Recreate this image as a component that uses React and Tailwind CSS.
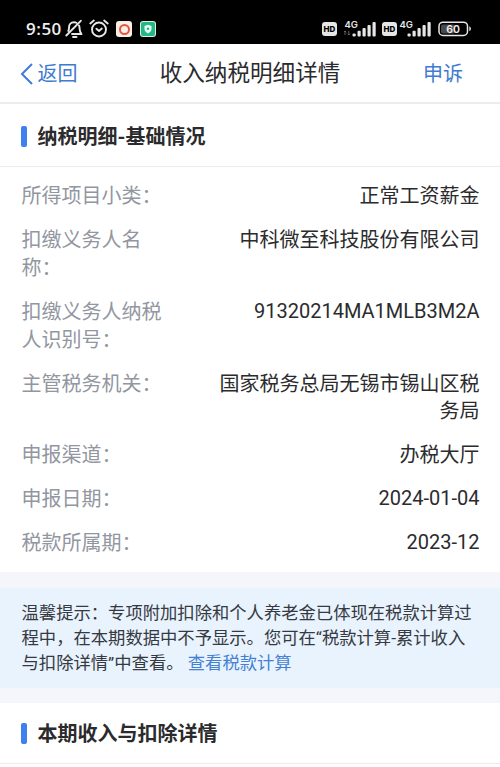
const rows = [
  { label: ["所得项目小类："], value: ["正常工资薪金"] },
  { label: ["扣缴义务人名", "称："], value: ["中科微至科技股份有限公司"] },
  { label: ["扣缴义务人纳税", "人识别号："], value: ["91320214MA1MLB3M2A"], latin: true },
  { label: ["主管税务机关："], value: ["国家税务总局无锡市锡山区税", "务局"] },
  { label: ["申报渠道："], value: ["办税大厅"] },
  { label: ["申报日期："], value: ["2024-01-04"], latin: true },
  { label: ["税款所属期："], value: ["2023-12"], latin: true },
];

function MutedBell() {
  return (
    <svg className="ml-[2px] shrink-0" width="18" height="20" viewBox="0 0 18 20" fill="none" stroke="#e8e8e8" strokeWidth="1.9" strokeLinecap="round" strokeLinejoin="round">
      <path d="M14 6.500c.6 1 .6 2 .6 3.300 0 2.200.6 3.700 1.900 5.200H7" />
      <path d="M3.300 12C4 10.500 4 9.800 4 8.500c0-3 2-5.300 5-5.300.9 0 1.700.2 2.400.6" />
      <path d="M1.300 16.500 15.800 1.800M8 18h3.500" />
    </svg>
  );
}

function AlarmClock() {
  return (
    <svg className="ml-[6px] shrink-0" width="20" height="20" viewBox="0 0 20 20" fill="none" stroke="#e8e8e8" strokeWidth="1.9" strokeLinecap="round" strokeLinejoin="round">
      <circle cx="10" cy="10.500" r="7" />
      <path d="M1.300 4.500 4.800 1.600M18.700 4.500 15.200 1.600M7.400 9.800l2.600 2.100 2.800-2.300" />
    </svg>
  );
}

function HdBadge() {
  return (
    <span className="flex h-[14px] w-[15px] shrink-0 items-center justify-center rounded-[3px] bg-[#e6e6e6] font-['Inter',sans-serif] text-[8px] leading-none font-extrabold text-black">
      HD
    </span>
  );
}

function Signal({ data }) {
  return (
    <svg className="shrink-0" width="34" height="20" viewBox="0 0 34 20" fill="#e6e6e6">
      <text x="0.500" y="8.500" fontFamily="Inter, sans-serif" fontSize="9.500" fontWeight="600" textLength="13.500" lengthAdjust="spacingAndGlyphs">4G</text>
      {data && <path d="M1 12v4M-.3 13.300 1 12l1.300 1.300M4.800 12v4m-1.300-1.300L4.800 16l1.300-1.300" stroke="#777" strokeWidth=".8" fill="none" />}
      <rect x="8.500" y="14.500" width="3.200" height="3" rx="1" />
      <rect x="13.500" y="11.800" width="3.200" height="5.700" rx="1" />
      <rect x="18.500" y="9" width="3.200" height="8.500" rx="1" />
      <rect x="23.500" y="6" width="3.200" height="11.500" rx="1" />
      <rect x="28.500" y="3" width="3.200" height="14.500" rx="1" />
    </svg>
  );
}

function Battery() {
  return (
    <svg className="shrink-0" width="34" height="16" viewBox="0 0 34 16">
      <rect x="3" y="3.500" width="14" height="9" rx="2" fill="#4a4a4a" />
      <rect x="1" y="1.200" width="28.500" height="13.300" rx="4" fill="none" stroke="#e8e8e8" strokeWidth="1.500" />
      <path d="M31.300 5.500c1 .3 1.600 1 1.600 2.300s-.6 2-1.600 2.300z" fill="#e8e8e8" />
      <text x="15.200" y="11.900" textAnchor="middle" fontFamily="Inter, sans-serif" fontSize="10.500" fontWeight="600" fill="#f0f0f0">60</text>
    </svg>
  );
}

function StatusBar() {
  return (
    <div className="flex h-[44px] shrink-0 items-center bg-black pt-[14px] pr-[28px] pl-[26px]">
      <span className="w-[37px] font-['Open_Sans',sans-serif] text-[17px] leading-[20px] font-semibold tracking-[0.500px] text-[#ededed]">9:50</span>
      <MutedBell />
      <AlarmClock />
      <span className="ml-[7px] flex size-[16px] items-center justify-center rounded-[3px] bg-[#f8f0e8]">
        <span className="size-[11px] rounded-full border-[2.500px] border-[#e8553f]" />
      </span>
      <span className="ml-[8px] flex size-[16px] items-center justify-center rounded-[3px] bg-[#d5f3e6]">
        <svg width="14" height="14" viewBox="0 0 14 14">
          <rect width="14" height="14" rx="2" fill="#25b885" />
          <path d="M7 2.800 10.500 4v3c0 2-1.300 3.400-3.500 4.400C4.800 10.400 3.500 9 3.500 7V4z" fill="#e8fff6" />
          <circle cx="7" cy="6.800" r="1.300" fill="#25b885" />
        </svg>
      </span>
      <div className="ml-auto flex items-center">
        <HdBadge />
        <span className="ml-[7px] flex"><Signal data /></span>
        <span className="ml-[4px] flex"><HdBadge /></span>
        <span className="ml-[2px] flex"><Signal /></span>
        <span className="ml-[5px] flex"><Battery /></span>
      </div>
    </div>
  );
}

function SectionTitle({ children, className }) {
  return (
    <div className={`flex shrink-0 items-center border-b border-[#ececee] bg-white pl-[21px] ${className}`}>
      <span className="h-[21px] w-[6px] rounded-[2px] bg-[#3f80ee]" />
      <h2 className="ml-[10.500px] text-[20px] leading-[28px] font-bold text-[#2b2b2d]">{children}</h2>
    </div>
  );
}

export default function App() {
  return (
    <div lang="zh-CN" className="flex h-[767px] w-[500px] flex-col overflow-hidden bg-white font-[Roboto,'Noto_Sans_CJK_SC',sans-serif]">
      <StatusBar />
      <header className="grid h-[60px] shrink-0 grid-cols-[1fr_auto_1fr] items-center border-b-2 border-[#ececec] bg-white pt-[2px]">
        <a className="flex items-center pl-[20px] text-[20px] text-[#3f7bd0]">
          <svg width="14" height="22" viewBox="0 0 14 22" fill="none" stroke="#3f7bdc" strokeWidth="2">
            <path d="M12 1 2 11l10 10" />
          </svg>
          <span className="ml-[3.500px]">返回</span>
        </a>
        <h1 className="text-[22.600px] leading-[30px] text-[#2b2b2d]">收入纳税明细详情</h1>
        <a className="pr-[37px] text-right text-[20px] text-[#3f7bd0]">申诉</a>
      </header>

      <SectionTitle className="h-[63px] pt-[3px]">纳税明细-基础情况</SectionTitle>
      <dl className="flex h-[405px] shrink-0 flex-col gap-[16px] pt-[16px] pr-[20.500px] pl-[21.500px] text-[20px] leading-[27.900px]">
        {rows.map((row) => (
          <div key={row.label[0]} className="flex justify-between whitespace-nowrap">
            <dt className="text-[#92969f]">
              {row.label.map((line) => <div key={line}>{line}</div>)}
            </dt>
            <dd className={row.latin ? "-mt-px text-right text-[#2b2b2d]" : "text-right text-[#2b2b2d]"}>
              {row.value.map((line) => <div key={line}>{line}</div>)}
            </dd>
          </div>
        ))}
      </dl>

      <div className="shrink-0 bg-[#f4f6fb] pt-[16px] pb-[15px]">
        <p className="h-[100px] bg-[#e8f3fe] pt-[13px] pl-[21.500px] text-[17.320px] leading-[25px] whitespace-nowrap text-[#36393f]">
          温馨提示：专项附加扣除和个人养老金已体现在税款计算过
          <br />
          程中，在本期数据中不予显示。您可在“税款计算-累计收入
          <br />
          与扣除详情”中查看。 <a className="text-[#4581d2]">查看税款计算</a>
        </p>
      </div>
      <SectionTitle className="h-[61px] pt-[1.500px]">本期收入与扣除详情</SectionTitle>
    </div>
  );
}
